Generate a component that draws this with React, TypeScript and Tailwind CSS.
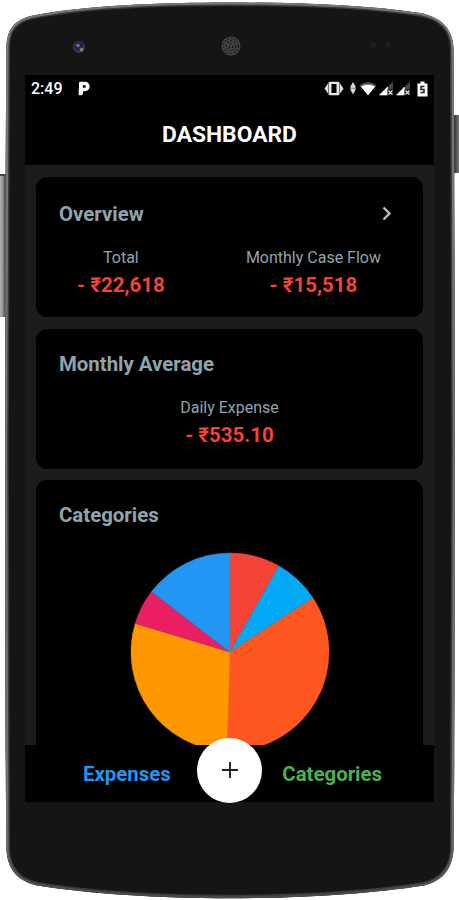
import type { ReactNode } from "react";

type Slice = { name: string; from: number; to: number; color: string };

// angles in degrees, clockwise from the top
const SLICES: Slice[] = [
  { name: "red", from: 0, to: 29.7, color: "#f44336" },
  { name: "sky", from: 29.7, to: 57, color: "#03a9f4" },
  { name: "deep-orange", from: 57, to: 181.8, color: "#ff5722" },
  { name: "orange", from: 181.8, to: 286.8, color: "#ff9800" },
  { name: "pink", from: 286.8, to: 307.6, color: "#e91e63" },
  { name: "blue", from: 307.6, to: 360, color: "#2196f3" },
];

const R = 99;

function point(deg: number) {
  const a = (deg * Math.PI) / 180;
  return `${(R + R * Math.sin(a)).toFixed(2)} ${(R - R * Math.cos(a)).toFixed(2)}`;
}

function PieChart() {
  return (
    <svg viewBox="0 0 198 198" className="w-[198px] h-[198px] shrink-0 overflow-visible">
      {SLICES.map((s) => (
        <path
          key={s.name}
          d={`M${R} ${R}L${point(s.from)}A${R} ${R} 0 0 1 ${point(s.to)}Z`}
          fill={s.color}
          stroke={s.color}
          strokeWidth="0.5"
          strokeLinejoin="round"
        />
      ))}
    </svg>
  );
}

const BODY =
  "M6.500 48C6.500 30 14 19.500 33 15.500C85 5.500 160 2.500 229 2.500C300 2.500 365 5 420 13C442 17 453 30 453.500 48C455 180 455.500 720 453.500 850C452 870 442 881 424 885.500C370 894 300 898.300 229 898.300C160 898.300 90 894 37 885.500C18 881 7.500 870 6.500 850C4.500 720 5 180 6.500 48Z";

function PhoneBody() {
  return (
    <svg viewBox="0 0 459 900" className="absolute inset-0 w-full h-full">
      <defs>
        <linearGradient id="key" x1="0" x2="1" y1="0" y2="0">
          <stop offset="0" stopColor="#bbb" />
          <stop offset="0.5" stopColor="#999" />
          <stop offset="1" stopColor="#333" />
        </linearGradient>
        <linearGradient id="power" x1="0" x2="1" y1="0" y2="0">
          <stop offset="0" stopColor="#333" />
          <stop offset="1" stopColor="#777" />
        </linearGradient>
        <linearGradient id="rim" x1="0" x2="0" y1="0" y2="1">
          <stop offset="0" stopColor="#777" />
          <stop offset="0.93" stopColor="#6e6e6e" />
          <stop offset="1" stopColor="#484848" />
        </linearGradient>
        <clipPath id="body">
          <path d={BODY} />
        </clipPath>
      </defs>
      <rect x="-1" y="175" width="7" height="142" fill="url(#key)" />
      <rect x="0" y="174" width="6" height="2" fill="#444" />
      <rect x="454" y="115" width="5" height="58" fill="url(#power)" />
      {/* the clip keeps only the inner half of each stroke */}
      <g clipPath="url(#body)">
        <path d={BODY} fill="#151515" stroke="#3a3a3a" strokeWidth="7" />
        <path d={BODY} fill="none" stroke="url(#rim)" strokeWidth="4" />
      </g>
      {/* front camera */}
      <circle cx="79" cy="47" r="6" fill="#3c3b40" />
      <circle cx="79" cy="46.500" r="4.500" fill="#25204a" />
      <circle cx="78" cy="45.500" r="1.800" fill="#716aa5" />
      <circle cx="81.500" cy="49.500" r="2" fill="#77757c" />
      {/* speaker */}
      <circle cx="231" cy="46" r="9.500" fill="#444" />
      <g fill="none" stroke="#181818" strokeWidth="1.200" strokeDasharray="2 1.500">
        <circle cx="231" cy="46" r="7.500" />
        <circle cx="231" cy="46" r="4.800" />
        <circle cx="231" cy="46" r="2" />
      </g>
      {/* sensors */}
      <circle cx="373" cy="45" r="3" fill="#202020" />
      <circle cx="388" cy="44.500" r="2.500" fill="#202020" />
    </svg>
  );
}

function SignalIcon() {
  return (
    <svg viewBox="0 0 15 15" className="w-[15px] h-[15px]">
      <path d="M14 0.500V14H0.500Z" fill="#444" />
      <path d="M8.500 6V14H0.500Z" fill="#fff" stroke="#fff" strokeWidth="0.600" />
      <path d="M8.500 8.500H15V15H8.500Z" fill="#000" />
      <path d="M9.500 9.500L13.500 13.500M13.500 9.500L9.500 13.500" stroke="#ddd" strokeWidth="1.500" />
    </svg>
  );
}

function StatusBar() {
  return (
    <div className="flex h-[27px] shrink-0 items-center pl-[6px] pr-[6px] text-white">
      <span className="text-[16px] font-medium leading-none">2:49</span>
      <svg viewBox="0 0 12 15" className="ml-[15px] w-[12px] h-[15px]">
        <path
          d="M1 2Q1 0.800 2.200 0.800H7A4.700 4.700 0 0 1 7 10.200H5V12.500Q4.700 14 3 14.200H0.700V9L1 7.500Z"
          fill="#fff"
        />
        <path d="M4.800 4.200H6.600A1.300 1.300 0 0 1 6.600 6.800H4.800Z" fill="#000" />
      </svg>
      <div className="ml-auto flex items-center">
        <svg viewBox="0 0 20 15" className="w-[20px] h-[15px]">
          <path d="M0.500 7.500L4 2.500V12.500ZM19.500 7.500L16 2.500V12.500Z" fill="#ddd" />
          <rect x="4.500" y="0.800" width="11" height="13.400" rx="1.500" fill="#e6e6e6" />
          <rect x="7.500" y="3" width="5" height="9" fill="#000" />
        </svg>
        <svg viewBox="0 0 6 15" className="ml-[6px] w-[6px] h-[15px]">
          <path d="M3 1L5.500 5.500V9L3 13.500L0.500 9V5.500Z" fill="#d6d6d6" />
          <path d="M0 7.300H6" stroke="#777" strokeWidth="0.800" />
        </svg>
        <svg viewBox="0 0 18 15" className="ml-[3px] w-[18px] h-[15px]">
          <path d="M0.500 4.500C5 0 13 0 17.500 4.500L9 14.500Z" fill="#555" />
          <path d="M2 5.700C6 3.200 12 3.200 16 5.700L9 14.300Z" fill="#fff" />
        </svg>
        <div className="ml-[2px] flex gap-[2px]">
          <SignalIcon />
          <SignalIcon />
        </div>
        <svg viewBox="0 0 11 16" className="ml-[6px] w-[11px] h-[16px]">
          <path d="M0.500 2.500H3.500V0.500H7.500V2.500H10.500V15.500H0.500Z" fill="#fff" />
          <path d="M7.500 5.500H4V8.500H7V11.500H3.500" fill="none" stroke="#222" strokeWidth="1.500" />
        </svg>
      </div>
    </div>
  );
}

function Stat({ label, value }: { label: string; value: string }) {
  return (
    <div className="flex flex-col items-center">
      <span className="text-[16px] leading-[22px] text-[#90a4ae]">{label}</span>
      <span className="mt-[3px] text-[20.5px] font-bold leading-[26px] text-[#f44336]">{value}</span>
    </div>
  );
}

function Card({ title, action, className, children }: {
  title: string;
  action?: ReactNode;
  className: string;
  children: ReactNode;
}) {
  return (
    <section className={`flex shrink-0 flex-col bg-black ${className}`}>
      <div className="flex h-[28px] items-center justify-between pl-[23px] pr-[31px]">
        <h2 className="text-[20.4px] font-bold leading-none text-[#90a4ae]">{title}</h2>
        {action}
      </div>
      {children}
    </section>
  );
}

export default function App() {
  return (
    <div className="relative h-[900px] w-[459px] overflow-hidden bg-white font-['Roboto',sans-serif]">
      <PhoneBody />
      <div className="relative pl-[25px] pt-[75px]">
        <main className="flex h-[727px] w-[409px] flex-col bg-black">
          <StatusBar />
          <header className="flex h-[63px] shrink-0 items-center justify-center pt-[3px]">
            <h1 className="text-[22.8px] font-bold leading-none text-white">DASHBOARD</h1>
          </header>

          <div className="flex h-[580px] shrink-0 flex-col gap-[11.5px] overflow-hidden bg-[#1c1c1c] px-[11px] pt-[12px]">
            <Card
              title="Overview"
              className="h-[140px] rounded-[11px] pt-[23px]"
              action={
                <svg viewBox="0 0 10 16" className="-mt-[2px] w-[10px] h-[16px]">
                  <path d="M1.500 2.500L7.500 8.500L1.500 14.500" fill="none" stroke="#b3c0c5" strokeWidth="2.400" />
                </svg>
              }
            >
              <div className="mt-[19px] flex justify-between pl-[41px] pr-[42px]">
                <Stat label="Total" value="- ₹22,618" />
                <Stat label="Monthly Case Flow" value="- ₹15,518" />
              </div>
            </Card>
            <Card title="Monthly Average" className="h-[140px] rounded-[11px] pt-[21.5px]">
              <div className="mt-[19px] flex justify-center">
                <Stat label="Daily Expense" value="- ₹535.10" />
              </div>
            </Card>
            <Card title="Categories" className="h-[290px] rounded-t-[11px] pt-[21.5px]">
              <div className="mt-[23.5px] flex justify-center">
                <PieChart />
              </div>
            </Card>
          </div>

          <nav className="relative flex h-[57px] items-center justify-between pl-[58px] pr-[52px] pt-[1px] text-[20.4px] font-bold">
            <span className="text-[#2196f3]">Expenses</span>
            <span className="text-[#4caf50]">Categories</span>
            <button className="absolute -top-[7.5px] left-[172px] flex size-[65px] items-center justify-center rounded-full bg-white">
              <svg viewBox="0 0 16 16" className="size-[16px]">
                <path d="M8 0V16M0 8H16" stroke="#222" strokeWidth="1.900" />
              </svg>
            </button>
          </nav>
        </main>
      </div>
    </div>
  );
}
